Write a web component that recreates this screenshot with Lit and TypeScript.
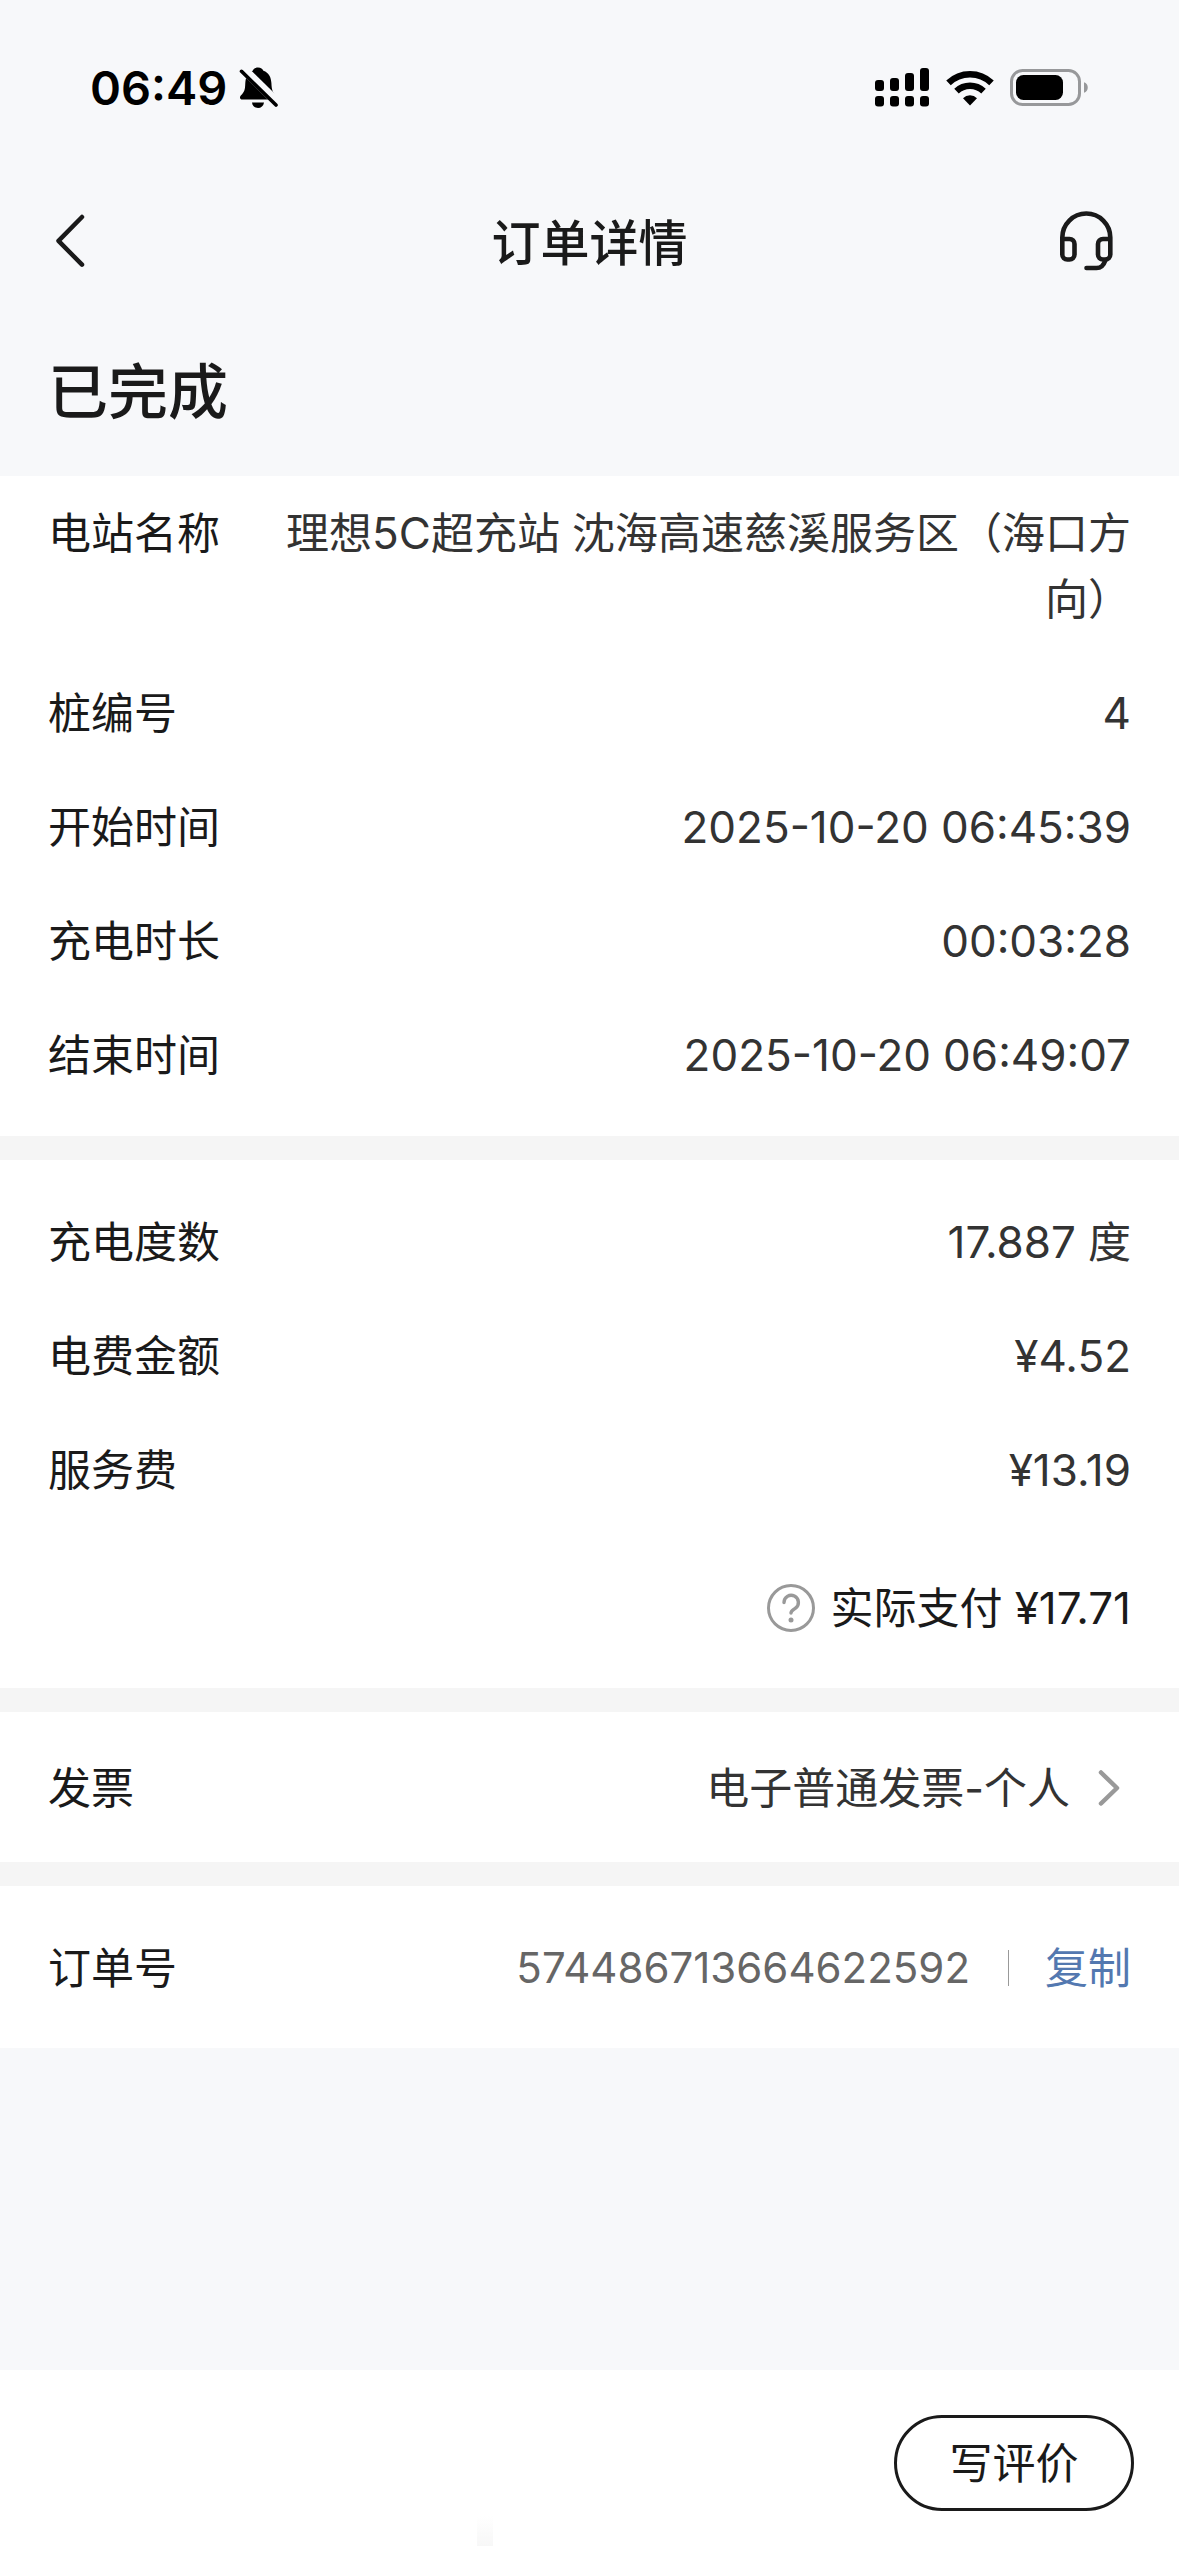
import { LitElement, html, css, svg } from "lit";
import { customElement, property } from "lit/decorators.js";

const base = css`
  * {
    box-sizing: border-box;
  }
  svg {
    display: block;
    flex: none;
  }
  button,
  a {
    font: inherit;
    color: inherit;
    background: none;
    border: 0;
    padding: 0;
    margin: 0;
    text-decoration: none;
    cursor: pointer;
  }
`;

@customElement("status-bar")
class StatusBar extends LitElement {
  static styles = [
    base,
    css`
      :host {
        display: flex;
        align-items: center;
        justify-content: space-between;
        height: 176px;
        padding: 0 90px;
        color: #000;
      }
      .side {
        display: flex;
        align-items: center;
      }
      .time {
        font: 600 47px/60px Inter, sans-serif;
      }
      .left {
        gap: 12px;
      }
      .right {
        gap: 16px;
      }
    `,
  ];

  render() {
    const bars = [12, 10, 5, 0];
    return html`
      <div class="side left">
        <span class="time">06:49</span>
        <svg width="40" height="42" viewBox="0 0 40 42" aria-hidden="true">
          <path
            d="M19 0.500c3 0 4.600 1.600 5.400 3.200 5.600 2 7.600 6.300 8 12.300.3 6.500 1 9.500 4.600 12.700 1.400 1.400 0.800 3.800-1.400 3.800H3.500C0.800 32.500 0.300 30 1.800 28.500c4-3.800 4.200-6 4.500-12.500.4-6 2-10.300 7.400-12.300C14.500 2.100 16 0.500 19 0.500z"
          />
          <path d="M13 35.500h12c-.5 3.600-3 5.500-6 5.500s-5.500-1.900-6-5.500z" />
          <path d="M3.500 1.200L39 36.200" stroke="#f7f8fa" stroke-width="9" />
          <path
            d="M2.500 4.300L37 38"
            stroke="#000"
            stroke-width="3.600"
            stroke-linecap="round"
          />
        </svg>
      </div>
      <div class="side right">
        <svg width="55" height="40" viewBox="0 0 55 40" aria-hidden="true">
          ${bars.map(
            (top, i) => svg`
              <rect x=${i * 15} y=${top} width="9" height=${23 - top} rx="3" />
              <rect x=${i * 15} y="28" width="9" height="10.500" rx="3" />`
          )}
        </svg>
        <svg width="48" height="36" viewBox="0 0 48 36" aria-hidden="true">
          <g fill="none" stroke="#000" stroke-width="6.500">
            <path d="M2.500 12.800a31 31 0 0 1 43 0" />
            <path d="M10.500 21.200a19.500 19.500 0 0 1 27 0" />
          </g>
          <path d="M24 35.500l-7-7.300a10 10 0 0 1 14 0z" />
        </svg>
        <svg width="79" height="38" viewBox="0 0 79 38" aria-hidden="true">
          <rect
            x="1.500"
            y="1.500"
            width="68"
            height="34"
            rx="11"
            fill="none"
            stroke="#97989a"
            stroke-width="3"
          />
          <rect x="6" y="6" width="47" height="25" rx="7.500" />
          <path d="M74 13.200c5 1.500 5 9 0 10.600z" fill="#97989a" />
        </svg>
      </div>
    `;
  }
}

@customElement("info-row")
class InfoRow extends LitElement {
  @property() label = "";
  @property() value = "";

  static styles = [
    base,
    css`
      :host {
        display: flex;
        justify-content: space-between;
        gap: 48px;
        line-height: 66px;
      }
      .label {
        flex: none;
        color: #1a1a1a;
      }
      .value {
        color: #333;
        text-align: right;
      }
      .num {
        font-size: 44px;
      }
    `,
  ];

  render() {
    const parts = this.value.split(/([\x21-\x7e¥]+)/).filter(Boolean);
    return html`
      <span class="label">${this.label}</span>
      <span class="value"
        >${parts.map((p) =>
          /[\x21-\x7e¥]/.test(p) ? html`<span class="num">${p}</span>` : p
        )}</span
      >
    `;
  }
}

@customElement("app-root")
class AppRoot extends LitElement {
  private session = [
    ["电站名称", "理想5C超充站 沈海高速慈溪服务区（海口方向）"],
    ["桩编号", "4"],
    ["开始时间", "2025-10-20 06:45:39"],
    ["充电时长", "00:03:28"],
    ["结束时间", "2025-10-20 06:49:07"],
  ];
  private fees = [
    ["充电度数", "17.887 度"],
    ["电费金额", "¥4.52"],
    ["服务费", "¥13.19"],
  ];

  static styles = [
    base,
    css`
      :host {
        display: flex;
        flex-direction: column;
        min-height: 100vh;
        background: #f7f8fa;
        color: #1a1a1a;
        font: 400 43px/66px Inter, "Noto Sans CJK SC", sans-serif;
      }
      .nav {
        display: grid;
        grid-template-columns: 1fr auto 1fr;
        align-items: center;
        height: 132px;
        padding: 0 54px;
      }
      .title {
        margin: 0;
        padding-top: 4px;
        font-size: 49px;
        font-weight: 500;
      }
      .support {
        justify-self: end;
        margin-right: 11px;
      }
      .state {
        margin: 0;
        padding: 40px 48px 40px;
        font-size: 60px;
        font-weight: 500;
        line-height: 88px;
      }
      .sections {
        display: flex;
        flex-direction: column;
        gap: 24px;
        background: #f5f5f5;
      }
      .card {
        background: #fff;
        padding-inline: 48px;
      }
      .rows {
        display: flex;
        flex-direction: column;
        gap: 48px;
      }
      .session {
        padding-block: 24px 48px;
      }
      .fees {
        padding-block: 49px 47px;
      }
      .pay {
        display: flex;
        align-items: center;
        justify-content: flex-end;
        margin-top: 24px;
      }
      .help {
        margin-right: 16px;
      }
      .num {
        font-size: 44px;
      }
      .line {
        display: flex;
        align-items: center;
        justify-content: space-between;
      }
      .invoice {
        padding-block: 43px 41px;
      }
      .invoice-link {
        display: flex;
        align-items: center;
        gap: 28px;
        padding-right: 11px;
        color: #333;
      }
      .order {
        padding-block: 49px 47px;
      }
      .order-info {
        display: flex;
        align-items: center;
      }
      .order-no {
        font-size: 42px;
        color: #666;
      }
      .divider {
        width: 1px;
        height: 36px;
        margin: 0 36px 0 38px;
        background: #999;
      }
      .copy {
        color: #5378b0;
      }
      .footer {
        display: flex;
        justify-content: flex-end;
        margin-top: auto;
        height: 186px;
        padding: 45px 45px 0;
        background: linear-gradient(#fff, #f7f7f7) 41% 146px / 16px 30px
          no-repeat #fff;
      }
      .review {
        width: 240px;
        height: 96px;
        border: 3px solid #1a1a1a;
        border-radius: 48px;
      }
    `,
  ];

  render() {
    const rows = (list: string[][]) =>
      list.map(
        ([l, v]) => html`<info-row .label=${l} .value=${v}></info-row>`
      );
    return html`
      <status-bar></status-bar>
      <header class="nav">
        <button aria-label="返回">
          <svg
            width="32"
            height="58"
            viewBox="0 0 32 58"
            fill="none"
            stroke="#1a1a1a"
            stroke-width="4.500"
            stroke-linecap="round"
            stroke-linejoin="round"
          >
            <path d="M28 4L4.500 27.800L28 51.700" />
          </svg>
        </button>
        <h1 class="title">订单详情</h1>
        <button class="support" aria-label="客服">
          <svg
            width="56"
            height="62"
            viewBox="0 0 56 62"
            fill="none"
            stroke="#1a1a1a"
            stroke-width="4.600"
            stroke-linecap="round"
            stroke-linejoin="round"
          >
            <path
              d="M4.300 28V43.500a5 5 0 0 0 5 5H11.500a5 5 0 0 0 5-5V33a5 5 0 0 0-5-5H4.300V26.500a24 24 0 0 1 48 0V28H45a5 5 0 0 0-5 5V43.500a5 5 0 0 0 5 5H47.300a5 5 0 0 0 5-5V28"
            />
            <path d="M47.500 49C45.500 55 43 57 38.500 57H28.500" />
          </svg>
        </button>
      </header>
      <h2 class="state">已完成</h2>
      <main class="sections">
        <section class="card rows session">${rows(this.session)}</section>
        <section class="card rows fees">
          ${rows(this.fees)}
          <div class="pay">
            <button class="help" aria-label="费用说明">
              <svg
                width="48"
                height="48"
                viewBox="0 0 48 48"
                fill="none"
                stroke="#999"
              >
                <circle cx="24" cy="24" r="22.500" stroke-width="3" />
                <path
                  d="M17 18.500a7.200 7.200 0 1 1 11.500 5.700c-2.300 1.700-4.500 2.600-4.500 4.800"
                  stroke-width="3.400"
                  stroke-linecap="round"
                />
                <circle cx="24" cy="36" r="2.500" fill="#999" stroke="none" />
              </svg>
            </button>
            <span>实际支付 <span class="num">¥17.71</span></span>
          </div>
        </section>
        <section class="card line invoice">
          <span>发票</span>
          <a class="invoice-link" href="#invoice">
            <span>电子普通发票-个人</span>
            <svg
              width="22"
              height="38"
              viewBox="0 0 22 38"
              fill="none"
              stroke="#999"
              stroke-width="4.500"
              stroke-linecap="round"
              stroke-linejoin="round"
            >
              <path d="M3 3.500L19 19L3 34.500" />
            </svg>
          </a>
        </section>
        <section class="card line order">
          <span>订单号</span>
          <div class="order-info">
            <span class="order-no">574486713664622592</span>
            <span class="divider"></span>
            <button class="copy">复制</button>
          </div>
        </section>
      </main>
      <footer class="footer">
        <button class="review">写评价</button>
      </footer>
    `;
  }
}
